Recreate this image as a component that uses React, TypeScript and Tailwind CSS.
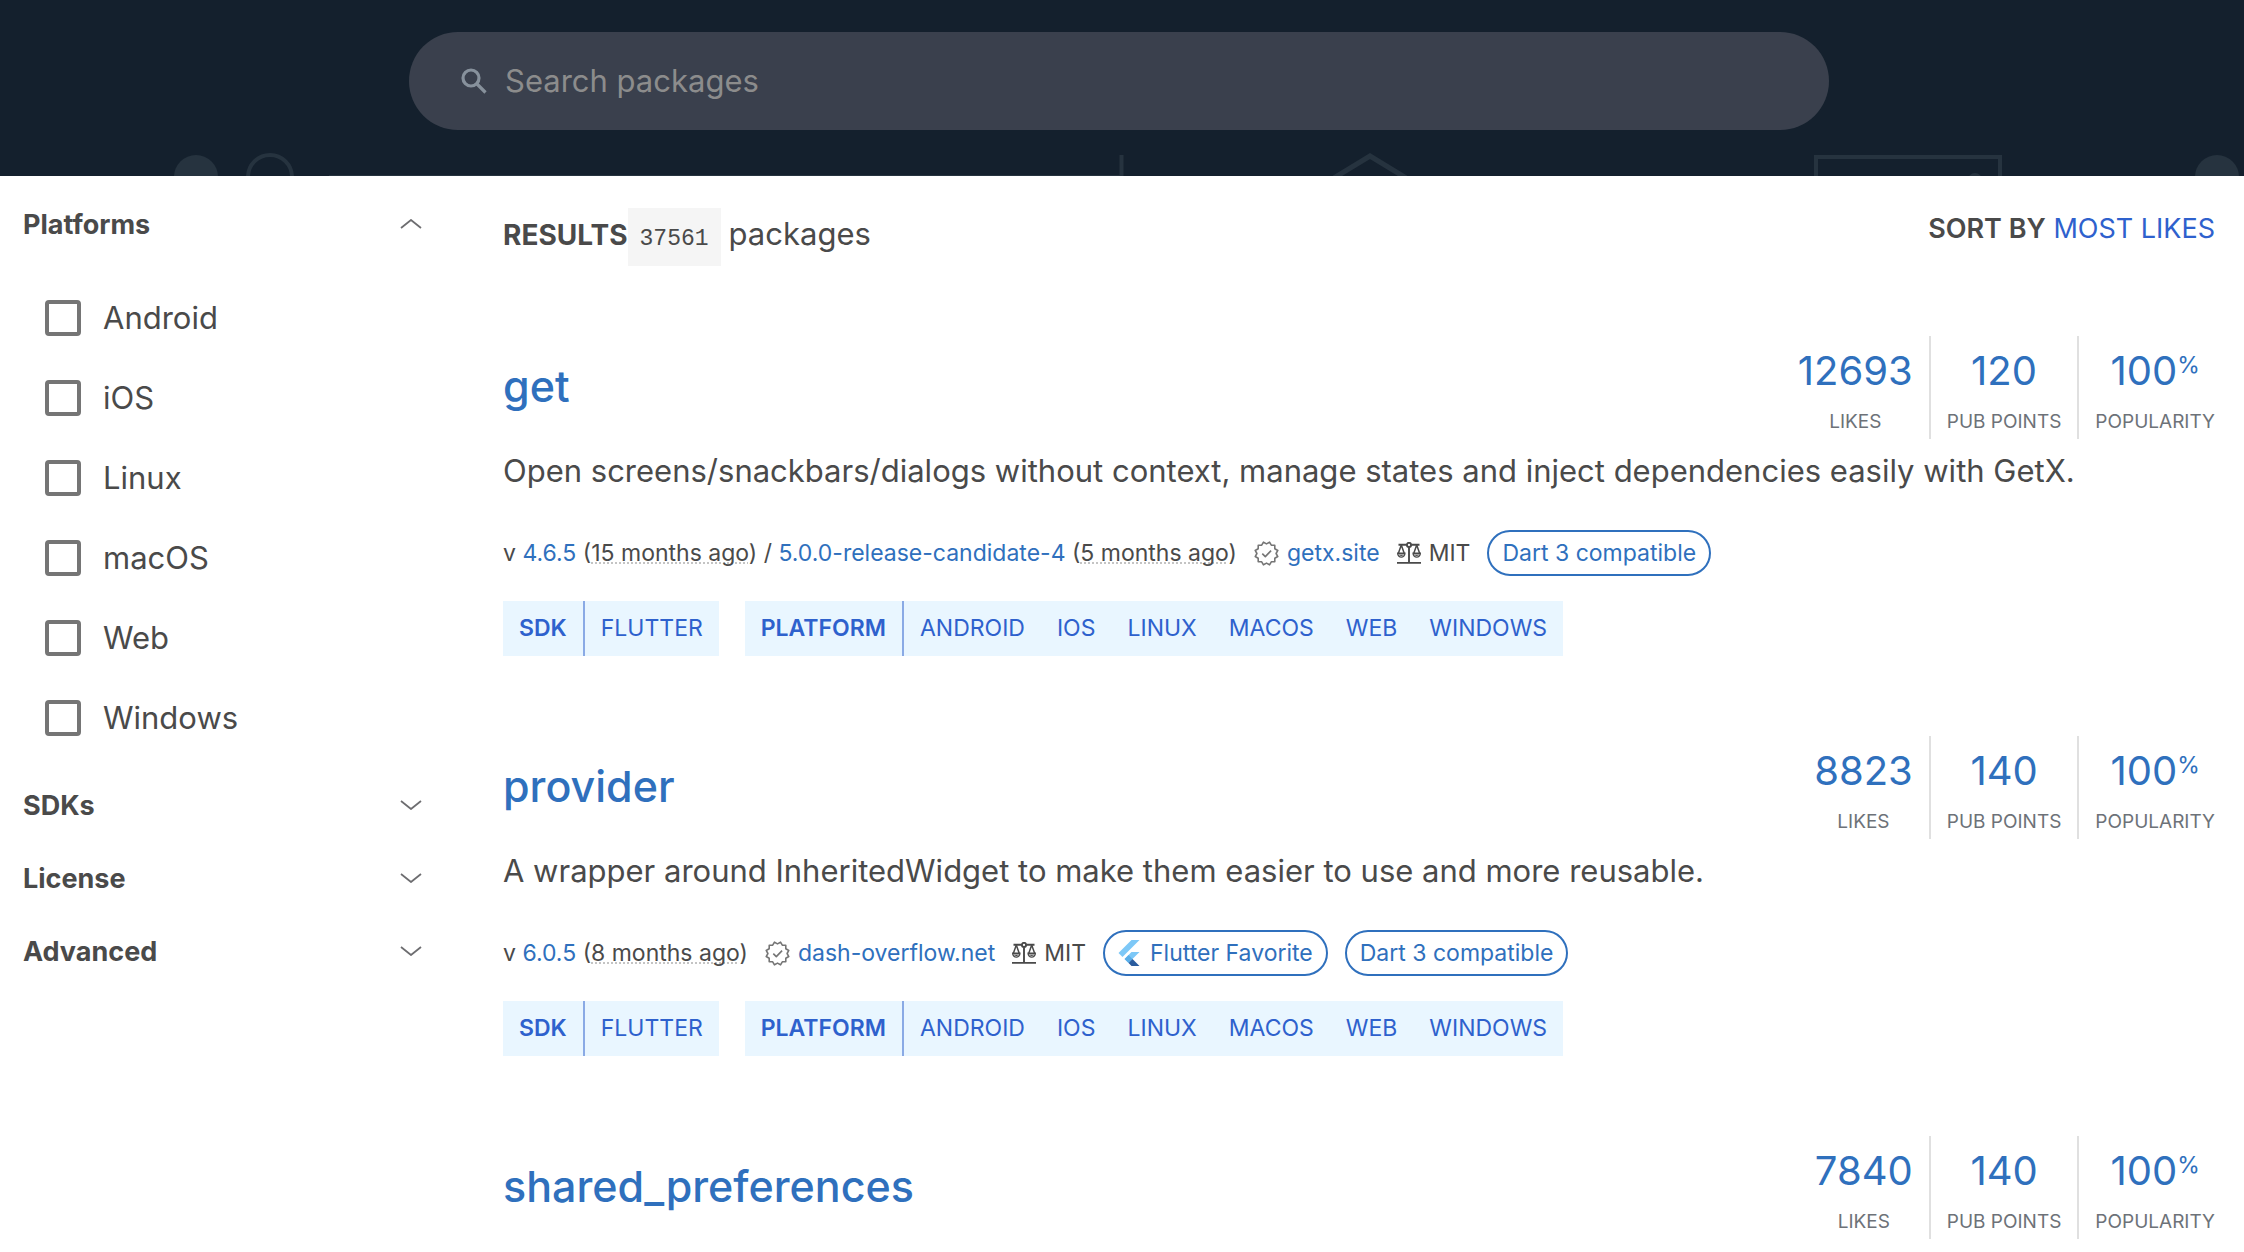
import { useState } from "react";

type Package = {
  name: string;
  likes: number;
  points: number;
  popularity: number;
  details?: {
    description: string;
    versions: { version: string; age: string }[];
    publisher: string;
    license: string;
    favorite?: boolean;
  };
};

const platforms = ["Android", "iOS", "Linux", "macOS", "Web", "Windows"];

const packages: Package[] = [
  {
    name: "get",
    likes: 12693,
    points: 120,
    popularity: 100,
    details: {
      description:
        "Open screens/snackbars/dialogs without context, manage states and inject dependencies easily with GetX.",
      versions: [
        { version: "4.6.5", age: "15 months ago" },
        { version: "5.0.0-release-candidate-4", age: "5 months ago" },
      ],
      publisher: "getx.site",
      license: "MIT",
    },
  },
  {
    name: "provider",
    likes: 8823,
    points: 140,
    popularity: 100,
    details: {
      description:
        "A wrapper around InheritedWidget to make them easier to use and more reusable.",
      versions: [{ version: "6.0.5", age: "8 months ago" }],
      publisher: "dash-overflow.net",
      license: "MIT",
      favorite: true,
    },
  },
  { name: "shared_preferences", likes: 7840, points: 140, popularity: 100 },
];

// 12 tips, outer and inner radius alternate
const sealPoints = Array.from({ length: 24 }, (_, i) => {
  const r = i % 2 === 0 ? 11.7 : 9.6;
  const a = ((i + 1) * Math.PI) / 12;
  return `${(12.5 + r * Math.sin(a)).toFixed(2)},${(12.5 - r * Math.cos(a)).toFixed(2)}`;
}).join(" ");

function SearchIcon() {
  return (
    <svg
      viewBox="0 0 26 26"
      className="size-[26px] shrink-0"
      fill="none"
      stroke="#87919c"
      strokeWidth="3.2"
      aria-hidden="true"
    >
      <circle cx="10" cy="10" r="8" />
      <path d="M15.5 15.5l9 9" />
    </svg>
  );
}

function VerifiedIcon() {
  return (
    <svg
      viewBox="0 0 25 25"
      className="size-[25px] shrink-0"
      fill="none"
      stroke="#757575"
      strokeWidth="1.6"
      strokeLinejoin="round"
      aria-hidden="true"
    >
      <polygon points={sealPoints} />
      <path d="M8.3 12.6l3 3 5.8-6" />
    </svg>
  );
}

function LicenseIcon() {
  return (
    <svg
      viewBox="0 0 24 22"
      className="h-[22px] w-[24px] shrink-0"
      fill="none"
      stroke="#4a4a4a"
      strokeWidth="1.9"
      aria-hidden="true"
    >
      <path d="M1.5 2.8h8.1M14.4 2.8h8.1M12 5.2V20.8M0 20.9h24" />
      <circle cx="12" cy="2.9" r="2.1" />
      <path d="M4.3 3L1.3 11.5M4.3 3l3 8.5M19.7 3l-3 8.5M19.7 3l3 8.5" strokeWidth="1.5" />
      <path
        d="M0.7 11.3h7.2a3.6 3.8 0 0 1-7.2 0zM16.1 11.3h7.2a3.6 3.8 0 0 1-7.2 0z"
        strokeWidth="1.4"
      />
      <path
        d="M1.4 12.6h5.8a3.2 2.4 0 0 1-5.8 0zM16.8 12.6h5.8a3.2 2.4 0 0 1-5.8 0z"
        fill="#4a4a4a"
        stroke="none"
      />
    </svg>
  );
}

function FlutterLogo() {
  return (
    <svg viewBox="2 0 20 24" className="h-[26px] w-[22px] shrink-0" aria-hidden="true">
      <path d="M14.3 0L2.3 12 6 15.7 21.7 0z" fill="#7dc8f7" />
      <path d="M14.3 11.1l-6.4 6.4 3.7 3.7 3.6-3.7 6.5-6.4z" fill="#7dc8f7" />
      <path d="M11.6 13.8l-3.7 3.7 3.7 3.7 3.6-3.7z" fill="#5aaee8" />
      <path d="M11.6 21.2l2.7 2.8h7.4l-6.5-6.5z" fill="#2a5c9e" />
    </svg>
  );
}

function Chevron({ open }: { open: boolean }) {
  return (
    <svg
      viewBox="0 0 22 10"
      className="mr-px mb-[3px] h-[10px] w-[22px]"
      fill="none"
      stroke="#6d6d70"
      strokeWidth="1.8"
      aria-hidden="true"
    >
      <path d={open ? "M1 9l10-8 10 8" : "M1 1l10 8 10-8"} />
    </svg>
  );
}

function HeaderPattern() {
  return (
    <svg
      viewBox="0 0 2244 176"
      preserveAspectRatio="xMidYMax slice"
      className="absolute inset-0 size-full"
      fill="none"
      stroke="#26333f"
      strokeWidth="4"
      aria-hidden="true"
    >
      <circle cx="196" cy="177" r="22" fill="#26333f" stroke="none" />
      <circle cx="270" cy="177" r="22" />
      <path d="M329 175.5h793" strokeWidth="1" />
      <path d="M1121.5 155v21" strokeWidth="4" />
      <path d="M1334 178l36-22 36 22" strokeWidth="5" />
      <path d="M1816 178v-21h184v21" />
      <circle cx="1975" cy="180" r="7" fill="#26333f" stroke="none" />
      <circle cx="2217" cy="177" r="22" fill="#26333f" stroke="none" />
    </svg>
  );
}

function FilterSection({
  title,
  options = [],
  defaultOpen = false,
}: {
  title: string;
  options?: string[];
  defaultOpen?: boolean;
}) {
  const [open, setOpen] = useState(defaultOpen);

  return (
    <section>
      <button
        type="button"
        aria-expanded={open}
        onClick={() => setOpen(!open)}
        className="flex h-[73px] w-full items-center justify-between text-[27px] font-bold"
      >
        {title}
        <Chevron open={open} />
      </button>
      {open && options.length > 0 && (
        <ul className="pt-4 pb-3 pl-[22px]">
          {options.map((option) => (
            <li key={option}>
              <label className="flex h-20 items-center gap-[22px] text-[31px]">
                <input
                  type="checkbox"
                  className="size-9 appearance-none rounded-sm border-4 border-[#757575] bg-white checked:bg-[#2f70bd]"
                />
                {option}
              </label>
            </li>
          ))}
        </ul>
      )}
    </section>
  );
}

function Score({ value, label, unit }: { value: number; label: string; unit?: string }) {
  return (
    <div className="flex h-[103px] flex-col items-center border-l-2 border-[#e0e0e0] px-4 pt-[7px] first:border-l-0 last:pr-0">
      <div className="flex items-start text-[40px] leading-[56px] text-[#2f70bd]">
        {value}
        {unit && <span className="text-[23px] leading-[44px]">{unit}</span>}
      </div>
      <div className="pt-[9px] text-[19px] leading-7 text-[#6d7278]">{label}</div>
    </div>
  );
}

function TagGroup({ label, tags }: { label: string; tags: string[] }) {
  return (
    <div className="flex h-[55px] items-center bg-[#e9f6ff] text-[23px] text-[#2e61cd]">
      <span className="flex h-full items-center border-r-2 border-[#8aaae5] px-4 font-semibold">
        {label}
      </span>
      {tags.map((tag) => (
        <a key={tag} href="#" className="px-4">
          {tag}
        </a>
      ))}
    </div>
  );
}

function PackageItem({ pkg }: { pkg: Package }) {
  const { details } = pkg;

  return (
    <article>
      <div className="flex items-center justify-between">
        <h3 className="pb-[3px] text-[43px] leading-[56px] font-medium">
          <a href="#" className="text-[#2f70bd]">
            {pkg.name}
          </a>
        </h3>
        <div className="flex">
          <Score value={pkg.likes} label="LIKES" />
          <Score value={pkg.points} label="PUB POINTS" />
          <Score value={pkg.popularity} label="POPULARITY" unit="%" />
        </div>
      </div>

      {details && (
        <>
          <p className="mt-2 text-[31px] leading-[48px]">{details.description}</p>
          <div className="mt-[35px] flex h-[46px] items-center gap-[17px] text-[23px] whitespace-nowrap">
            <span>
              v{" "}
              {details.versions.map(({ version, age }, i) => (
                <span key={version}>
                  {i > 0 && " / "}
                  <a href="#" className="text-[#2f70bd]">
                    {version}
                  </a>{" "}
                  (
                  <span className="underline decoration-[#c4c4c4] decoration-dotted decoration-2 underline-offset-2 [text-decoration-skip-ink:none]">
                    {age}
                  </span>
                  )
                </span>
              ))}
            </span>
            <span className="flex items-center gap-2">
              <VerifiedIcon />
              <a href="#" className="text-[#2f70bd]">
                {details.publisher}
              </a>
            </span>
            <span className="flex items-center gap-2">
              <LicenseIcon />
              {details.license}
            </span>
            {details.favorite && (
              <a
                href="#"
                className="flex h-full items-center gap-[10px] rounded-full border-2 border-[#2f70bd] px-[13px] text-[#2f70bd]"
              >
                <FlutterLogo />
                Flutter Favorite
              </a>
            )}
            <span className="flex h-full items-center rounded-full border-2 border-[#2f70bd] px-[13px] text-[#2f70bd]">
              Dart 3 compatible
            </span>
          </div>
          <div className="mt-[25px] flex gap-[26px]">
            <TagGroup label="SDK" tags={["FLUTTER"]} />
            <TagGroup
              label="PLATFORM"
              tags={["ANDROID", "IOS", "LINUX", "MACOS", "WEB", "WINDOWS"]}
            />
          </div>
        </>
      )}
    </article>
  );
}

export default function App() {
  return (
    <div className="min-h-screen bg-white font-[Inter,sans-serif] text-[#4a4a4a]">
      <header className="relative bg-[#14202d] pt-8 pr-[29px] pb-[46px] pl-[23px]">
        <HeaderPattern />
        <form
          role="search"
          className="relative mx-auto flex h-[98px] max-w-[1420px] items-center gap-[18px] rounded-full bg-[#3a404d] pr-10 pl-[52px]"
        >
          <SearchIcon />
          <input
            type="search"
            aria-label="Search packages"
            placeholder="Search packages"
            className="min-w-0 flex-1 bg-transparent text-[31px] text-white outline-none placeholder:text-[#8c8c8c]"
          />
        </form>
      </header>

      <div className="flex gap-20 pr-[29px] pl-[23px]">
        <aside className="w-[400px] shrink-0 pt-[13px]">
          <FilterSection title="Platforms" options={platforms} defaultOpen />
          <FilterSection title="SDKs" />
          <FilterSection title="License" />
          <FilterSection title="Advanced" />
        </aside>

        <main className="min-w-0 flex-1 pt-8">
          <div className="flex items-start justify-between">
            <p className="flex items-baseline text-[31px] leading-[42px]">
              <span className="text-[28px] font-bold">RESULTS</span>
              <code className="mr-2 bg-[#f5f5f5] px-3 pt-1 text-[23px] leading-[54px] font-[Liberation_Mono,monospace]">
                37561
              </code>
              packages
            </p>
            <p className="text-[27px] leading-[42px]">
              <span className="font-semibold">SORT BY</span>{" "}
              <button type="button" className="text-[#2e61cd]">
                MOST LIKES
              </button>
            </p>
          </div>

          <div className="mt-[70px] space-y-20">
            {packages.map((pkg) => (
              <PackageItem key={pkg.name} pkg={pkg} />
            ))}
          </div>
        </main>
      </div>
    </div>
  );
}
